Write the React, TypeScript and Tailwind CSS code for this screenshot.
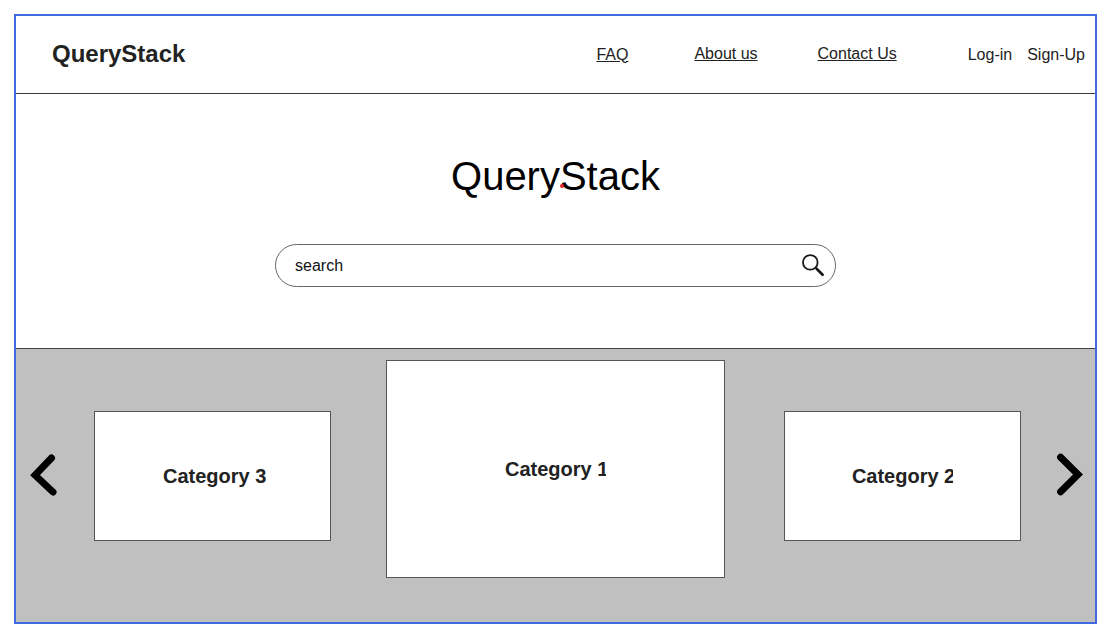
import React from 'react';

function SearchIcon() {
  return (
    <svg viewBox="0 0 24 24" className="size-6" fill="none" stroke="#181818" aria-hidden="true">
      <circle cx="9.3" cy="8.4" r="7.3" strokeWidth="1.8" />
      <path d="M14.6 13.6 L16.4 15.4" strokeWidth="1.8" />
      <path d="M15.9 15 L21.6 20.7" strokeWidth="2.7" strokeLinecap="round" />
    </svg>
  );
}

function Header() {
  return (
    <header className="flex h-[78px] items-center justify-between border-b border-[#3a3a3a] pl-9 pr-2.5 text-[#222]">
      <a href="#home" className="pb-0.5 text-2xl font-bold">
        QueryStack
      </a>
      <nav className="flex items-center text-base" aria-label="Main">
        <a href="#faq" className="mr-[66px] underline">
          FAQ
        </a>
        <a href="#about" className="mr-[60px] pb-0.5 underline">
          About us
        </a>
        <a href="#contact" className="mr-[71px] pb-0.5 underline">
          Contact Us
        </a>
        <a href="#login" className="mr-[15px]">
          Log-in
        </a>
        <a href="#signup">Sign-Up</a>
      </nav>
    </header>
  );
}

function Hero() {
  return (
    <section className="flex flex-col items-center border-b border-[#444] px-6 pb-[61px] pt-[58px]">
      <h1 className="relative text-[40px] leading-[48px] text-black">
        QueryStack
        <span className="absolute left-[109px] top-8 size-1 rounded-full bg-[#e8202a]" />
      </h1>
      <form
        role="search"
        onSubmit={(e) => e.preventDefault()}
        className="mt-11 flex h-[43px] w-full max-w-[561px] items-center rounded-full border border-[#666] pl-[19px] pr-2.5"
      >
        <input
          type="text"
          aria-label="search"
          placeholder="search"
          className="h-full min-w-0 flex-1 bg-transparent text-base text-[#111] outline-none placeholder:text-[#111] placeholder:opacity-100"
        />
        <button type="submit" aria-label="Submit search">
          <SearchIcon />
        </button>
      </form>
    </section>
  );
}

function Arrow({ label, d }: { label: string; d: string }) {
  return (
    <button type="button" aria-label={label} className="mt-[92px] shrink-0">
      <svg
        viewBox="0 0 27 44"
        className="h-11 w-[27px] overflow-visible"
        fill="none"
        stroke="#000"
        strokeWidth="7"
        strokeLinecap="round"
        strokeLinejoin="miter"
        aria-hidden="true"
      >
        <path d={d} />
      </svg>
    </button>
  );
}

const sideCard =
  'mt-[51px] flex h-[130px] min-w-0 flex-[237] items-center justify-center border border-[#555] bg-white';
const mainCard =
  'mr-1 flex h-[218px] min-w-0 flex-[339] items-center justify-center border border-[#555] bg-white';

function Categories() {
  return (
    <section className="flex flex-1 items-start gap-9 bg-[#c0c0c0] pb-11 pl-[15px] pr-[11px] pt-[11px] text-xl font-bold text-[#222]">
      <Arrow label="Previous" d="M20.5 6 L4.1 23.2 L22 40" />
      <div className="flex flex-1 items-start gap-[55px]">
        <a href="#category-3" className={sideCard}>
          <span className="pl-1">Category 3</span>
        </a>
        <a href="#category-1" className={mainCard}>
          <span className="w-[101px] overflow-hidden whitespace-nowrap">Category 1</span>
        </a>
        <a href="#category-2" className={sideCard}>
          <span className="w-[101px] overflow-hidden whitespace-nowrap">Category 2</span>
        </a>
      </div>
      <Arrow label="Next" d="M3.6 5.2 L21 22.5 L3.6 39.8" />
    </section>
  );
}

export default function App() {
  return (
    <div className="flex min-h-screen bg-white p-3.5 font-['Liberation_Sans',Arial,sans-serif]">
      <main className="flex flex-1 flex-col border-2 border-[#4169e1]">
        <Header />
        <Hero />
        <Categories />
      </main>
    </div>
  );
}
